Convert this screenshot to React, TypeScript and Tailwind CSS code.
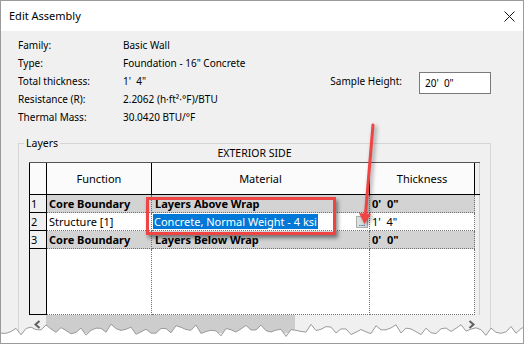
import React from 'react';

const props: [string, string][] = [
  ['Family:', 'Basic Wall'],
  ['Type:', 'Foundation - 16" Concrete'],
  ['Total thickness:', `1'  4"`],
  ['Resistance (R):', '2.2062 (h·ft²·°F)/BTU'],
  ['Thermal Mass:', '30.0420 BTU/°F'],
];

interface Layer {
  n: number;
  fn: string;
  material: string;
  thickness: string;
  boundary?: boolean;
  selected?: boolean;
}

const layers: Layer[] = [
  { n: 1, fn: 'Core Boundary', material: 'Layers Above Wrap', thickness: `0'  0"`, boundary: true },
  { n: 2, fn: 'Structure [1]', material: 'Concrete, Normal Weight - 4 ksi', thickness: `1'  4"`, selected: true },
  { n: 3, fn: 'Core Boundary', material: 'Layers Below Wrap', thickness: `0'  0"`, boundary: true },
];

// jagged torn paper edge at the bottom of the screenshot
const edgePoints = Array.from({ length: 107 }, (_, i) => {
  const x = i * 5;
  const y = 7 + 3 * Math.sin(i * 1.9) + 2 * Math.sin(i * 0.45 + 1) + 1.5 * Math.cos(i * 3.3);
  return `${x},${y.toFixed(1)}`;
});

const Chevron = ({ dir }: { dir: 'left' | 'right' }) => (
  <svg width="7" height="9" viewBox="0 0 7 9">
    <polyline
      points={dir === 'left' ? '5.5,1 1.5,4.5 5.5,8' : '1.5,1 5.5,4.5 1.5,8'}
      fill="none"
      stroke="#606060"
      strokeWidth={2}
    />
  </svg>
);

const App: React.FC = () => {
  return (
    <div className="relative w-[524px] h-[344px] overflow-hidden border border-[#9b9b9b] bg-[#f0f0f0] font-['Noto_Sans',sans-serif] text-black">
      {/* title bar */}
      <div className="flex h-[30px] items-center justify-between bg-white pl-[8px] pr-[8px]">
        <span className="text-[11px]">Edit Assembly</span>
        <svg width="11" height="11" viewBox="0 0 11 11">
          <path d="M0.5 0.5L10.5 10.5M10.5 0.5L0.5 10.5" stroke="#111" strokeWidth={1} />
        </svg>
      </div>

      <div className="pl-[17px] pt-[5px] text-[10px]">
        {props.map(([label, value], i) => (
          <div key={label} className="flex h-[18px] w-[473px] items-center leading-[18px]">
            <span className="w-[105px]">{label}</span>
            <span className="whitespace-pre">{value}</span>
            {i === 2 && (
              <div className="ml-auto flex self-start">
                <span className="mr-[17px] leading-[18px]">Sample Height:</span>
                <div className="h-[22px] w-[72px] border border-[#7a7a7a] bg-white pl-[5px] leading-[20px] whitespace-pre">
                  20'  0"
                </div>
              </div>
            )}
          </div>
        ))}

        <fieldset className="mt-[12px] w-[473px] border border-[#d5d5d5] px-[10px] pb-[12px]">
          <legend className="-ml-[5px] px-[2px] text-[10.5px] leading-[10px]">Layers</legend>
          <div className="text-center text-[10.5px] leading-[10px]">EXTERIOR SIDE</div>

          <div className="mt-[4px] w-[451px] text-[11px]">
            {/* header */}
            <div className="flex h-[33px] border-t border-b border-t-[#555] border-b-black bg-[#fbfbfb] leading-[31px]">
              <div className="w-[18px] border-l border-r border-black" />
              <div className="w-[105px] border-r border-black text-center">Function</div>
              <div className="w-[218px] border-r border-black text-center">Material</div>
              <div className="w-[105px] border-r border-black text-center">Thickness</div>
              <div className="w-[5px] border-r border-[#d0d0d0] bg-[#f0f0f0]" />
            </div>

            {/* rows */}
            {layers.map((l) => {
              const bg = l.boundary ? 'bg-[#d3d3d3] font-bold' : 'bg-white';
              return (
                <div key={l.n} className="flex h-[18px] leading-[17px]">
                  <div className="w-[18px] border-l border-r border-b border-black bg-[#f0f0f0] pl-[1px]">{l.n}</div>
                  <div className={`w-[105px] border-r border-b border-dotted border-[#707070] pl-[2px] ${bg}`}>{l.fn}</div>
                  <div className={`flex w-[218px] items-center border-r border-b border-dotted border-[#707070] ${bg} ${l.selected ? 'pl-[1px]' : 'pl-[3px]'}`}>
                    {l.selected ? (
                      <>
                        <span className="bg-[#0078d7] px-[1px] leading-[15px] text-white">{l.material}</span>
                        <span className="ml-auto mr-[1px] flex h-[12px] w-[12px] items-end justify-center border border-[#adadad] bg-[#e1e1e1] text-[8px] leading-[9px] text-[#222]">
                          ...
                        </span>
                      </>
                    ) : (
                      l.material
                    )}
                  </div>
                  <div className={`w-[105px] border-r border-b border-dotted border-[#707070] pl-[2px] whitespace-pre ${bg}`}>{l.thickness}</div>
                  <div className="w-[5px] border-r border-[#d0d0d0] bg-[#f0f0f0]" />
                </div>
              );
            })}

            {/* empty area */}
            <div className="flex h-[66px]">
              <div className="w-[18px] border-l border-r border-b border-black bg-[#f0f0f0]" />
              <div className="w-[105px] border-r border-b border-dotted border-[#707070] bg-white" />
              <div className="w-[218px] border-r border-b border-dotted border-[#707070] bg-white" />
              <div className="w-[105px] border-r border-b border-dotted border-[#707070] bg-white" />
              <div className="w-[5px] border-r border-[#d0d0d0] bg-[#f0f0f0]" />
            </div>

            {/* horizontal scrollbar */}
            <div className="flex h-[18px] items-center bg-[#f0f0f0]">
              <div className="flex h-full w-[17px] items-center justify-center">
                <Chevron dir="left" />
              </div>
              <div className="h-full w-[249px] bg-[#cdcdcd]" />
              <div className="flex-1" />
              <div className="flex h-full w-[17px] items-center justify-center">
                <Chevron dir="right" />
              </div>
            </div>
          </div>
        </fieldset>
      </div>

      {/* annotation: red highlight box */}
      <div className="absolute left-[145px] top-[196px] h-[38px] w-[190px] border-[3px] border-[#ef4444] shadow-[2px_3px_4px_rgba(0,0,0,0.45)]" />

      {/* annotation: red arrow */}
      <svg
        className="absolute left-[350px] top-[115px] drop-shadow-[2px_2px_2px_rgba(0,0,0,0.4)]"
        width="35"
        height="115"
        viewBox="0 0 35 115"
      >
        <line x1="22" y1="9" x2="14.5" y2="98" stroke="#ef4444" strokeWidth={3} strokeLinecap="round" />
        <polygon points="8,97 20,98 13.5,108" fill="#ef4444" />
      </svg>

      {/* torn edge */}
      <svg className="absolute bottom-0 left-0" width="524" height="20" viewBox="0 0 524 20">
        <polygon points={`0,20 ${edgePoints.join(' ')} 530,20`} fill="#fff" />
        <polyline points={edgePoints.join(' ')} fill="none" stroke="#9a9a9a" strokeWidth={1} />
      </svg>
    </div>
  );
};

export default App;
